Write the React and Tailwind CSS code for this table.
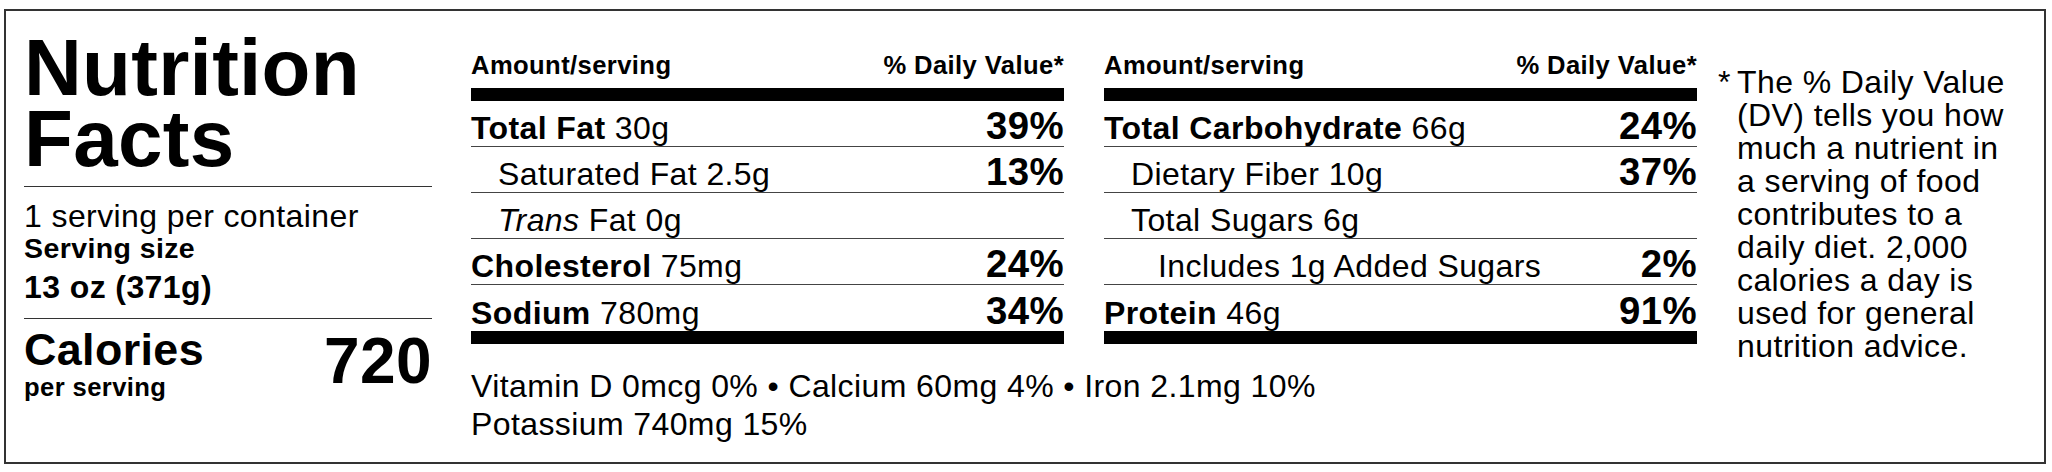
const font = { fontFamily: '"Liberation Sans", Arial, sans-serif' };

const leftRows = [
  { label: "Total Fat", amount: "30g", dv: "39%", bold: true },
  { label: "Saturated Fat", amount: "2.5g", dv: "13%", indent: 1 },
  { label: "Trans", italic: true, amount: "Fat 0g", dv: "", indent: 1 },
  { label: "Cholesterol", amount: "75mg", dv: "24%", bold: true },
  { label: "Sodium", amount: "780mg", dv: "34%", bold: true },
];

const rightRows = [
  { label: "Total Carbohydrate", amount: "66g", dv: "24%", bold: true },
  { label: "Dietary Fiber", amount: "10g", dv: "37%", indent: 1 },
  { label: "Total Sugars", amount: "6g", dv: "", indent: 1 },
  { label: "Includes 1g Added Sugars", amount: "", dv: "2%", indent: 2 },
  { label: "Protein", amount: "46g", dv: "91%", bold: true },
];

function Row({ row, last }) {
  const pad = row.indent === 2 ? "pl-[54px]" : row.indent === 1 ? "pl-[27px]" : "";
  return (
    <div
      className={`h-[46px] flex flex-col justify-end ${
        last ? "" : "border-b border-[#444]"
      }`}
    >
      <div className={`flex justify-between items-baseline leading-none ${pad}`}>
        <span className="text-[32px]">
          {row.bold ? (
            <b className="font-bold">{row.label}</b>
          ) : row.italic ? (
            <i>{row.label}</i>
          ) : (
            row.label
          )}
          {row.amount ? " " + row.amount : ""}
        </span>
        <span className="text-[38.4px] font-bold">{row.dv || "\u00a0"}</span>
      </div>
    </div>
  );
}

function Table({ rows }) {
  return (
    <div className="flex flex-col">
      <div className="flex justify-between items-end leading-none font-bold text-[25.6px] pb-[9px]">
        <span>Amount/serving</span>
        <span>% Daily Value*</span>
      </div>
      <div className="h-[13px] bg-black" />
      {rows.map((r, i) => (
        <Row key={i} row={r} last={i === rows.length - 1} />
      ))}
      <div className="h-[13px] bg-black" />
    </div>
  );
}

export default function App() {
  return (
    <div
      className="w-[2052px] h-[472px] bg-white pt-[9px] pl-[4px] pr-[6px] tracking-[0.4px]"
      style={font}
    >
      <div className="h-[455px] border-2 border-[#333] flex items-start pl-[18px] text-black">
        {/* left column */}
        <div className="w-[408px] mt-[21px] flex flex-col">
          <h1 className="text-[80px] font-bold leading-[71px] pb-[12px] border-b border-[#333] tracking-[0.3px]">
            Nutrition
            <br />
            Facts
          </h1>
          <div className="pt-[13px] pb-[15px] border-b border-[#333] leading-none">
            <p className="text-[32px]">1 serving per container</p>
            <p className="text-[28.5px] font-bold mt-[2px]">Serving size</p>
            <p className="text-[32px] font-bold mt-[8px]">13 oz (371g)</p>
          </div>
          <div className="flex justify-between items-start pt-[8px] leading-none">
            <div className="flex flex-col">
              <span className="text-[44.8px] font-bold">Calories</span>
              <span className="text-[25.6px] font-bold mt-[4px]">per serving</span>
            </div>
            <span className="text-[64px] font-bold mt-[2px]">720</span>
          </div>
        </div>

        {/* tables + vitamins */}
        <div className="ml-[39px] w-[1226px] mt-[42px] flex flex-col">
          <div className="grid grid-cols-2 gap-x-[40px]">
            <Table rows={leftRows} />
            <Table rows={rightRows} />
          </div>
          <p className="text-[32px] leading-[38.4px] mt-[23px]">
            Vitamin D 0mcg 0% • Calcium 60mg 4% • Iron 2.1mg 10%
            <br />
            Potassium 740mg 15%
          </p>
        </div>

        {/* footnote */}
        <div className="ml-[21px] mt-[55px] flex text-[32px] leading-[33px]">
          <span className="w-[19px]">*</span>
          <p className="w-[276px]">
            The % Daily Value (DV) tells you how much a nutrient in a serving of food
            contributes to a daily diet. 2,000 calories a day is used for general
            nutrition advice.
          </p>
        </div>
      </div>
    </div>
  );
}
